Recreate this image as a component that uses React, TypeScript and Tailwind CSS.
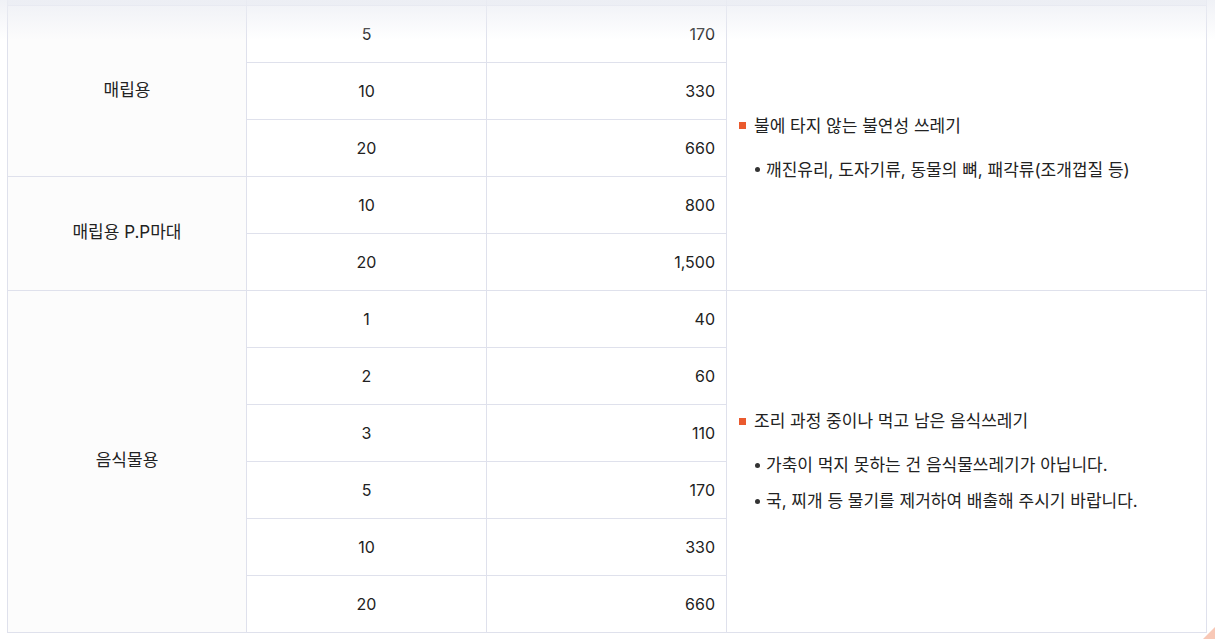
const font = { fontFamily: '"Inter", "Noto Sans CJK KR", sans-serif' };

type Row = { size: string; price: string };

const groups: { name: string; rows: Row[] }[] = [
  {
    name: "매립용",
    rows: [
      { size: "5", price: "170" },
      { size: "10", price: "330" },
      { size: "20", price: "660" },
    ],
  },
  {
    name: "매립용 P.P마대",
    rows: [
      { size: "10", price: "800" },
      { size: "20", price: "1,500" },
    ],
  },
  {
    name: "음식물용",
    rows: [
      { size: "1", price: "40" },
      { size: "2", price: "60" },
      { size: "3", price: "110" },
      { size: "5", price: "170" },
      { size: "10", price: "330" },
      { size: "20", price: "660" },
    ],
  },
];

function Note({ title, items }: { title: string; items: string[] }) {
  return (
    <div className="pl-[12px] text-[17px]">
      <div className="flex items-center gap-[8px] leading-6">
        <span className="w-[7px] h-[7px] bg-[#ea5a2e]"></span>
        <span>{title}</span>
      </div>
      <ul className="mt-5 flex flex-col gap-3 pl-[16px]">
        {items.map((it) => (
          <li key={it} className="flex items-center gap-[6px] leading-6">
            <span className="w-[5px] h-[5px] rounded-full bg-[#333]"></span>
            <span>{it}</span>
          </li>
        ))}
      </ul>
    </div>
  );
}

export default function App() {
  const cell = "border border-[#dfe1ec] h-[57px] p-0";
  const head = "border-x border-b border-[#dfe1ec] h-[5px] p-0 bg-[#eef0f5]";

  return (
    <div className="relative w-[1215px] h-[639px] overflow-hidden bg-white text-[16px] text-[#222]" style={font}>
      <div className="pl-[7px]">
        <table className="border-collapse table-fixed w-[1199px]">
          <colgroup>
            <col className="w-[239px]" />
            <col className="w-[240px]" />
            <col className="w-[240px]" />
            <col className="w-[480px]" />
          </colgroup>
          <tbody>
            <tr>
              <td className={head}></td>
              <td className={head}></td>
              <td className={head}></td>
              <td className={head}></td>
            </tr>
            {groups.map((g, gi) =>
              g.rows.map((r, ri) => (
                <tr key={`${gi}-${ri}`}>
                  {ri === 0 && (
                    <td rowSpan={g.rows.length} className={`${cell} text-center text-[17px] bg-[#fcfcfc]`}>
                      {g.name}
                    </td>
                  )}
                  <td className={`${cell} text-center`}>{r.size}</td>
                  <td className={`${cell} text-right pr-[11px]`}>{r.price}</td>
                  {gi === 0 && ri === 0 && (
                    <td rowSpan={5} className={`${cell} align-middle`}>
                      <Note
                        title="불에 타지 않는 불연성 쓰레기"
                        items={["깨진유리, 도자기류, 동물의 뼈, 패각류(조개껍질 등)"]}
                      />
                    </td>
                  )}
                  {gi === 2 && ri === 0 && (
                    <td rowSpan={6} className={`${cell} align-middle`}>
                      <Note
                        title="조리 과정 중이나 먹고 남은 음식쓰레기"
                        items={[
                          "가축이 먹지 못하는 건 음식물쓰레기가 아닙니다.",
                          "국, 찌개 등 물기를 제거하여 배출해 주시기 바랍니다.",
                        ]}
                      />
                    </td>
                  )}
                </tr>
              ))
            )}
          </tbody>
        </table>
      </div>
      <div className="pointer-events-none absolute left-0 right-0 top-0 h-[40px] bg-gradient-to-b from-[#eceef4]/80 to-transparent"></div>
      <svg className="absolute right-0 bottom-0" width="12" height="12" viewBox="0 0 12 12">
        <polygon points="12,0 12,12 0,12" fill="#f8c8b6" />
      </svg>
    </div>
  );
}
